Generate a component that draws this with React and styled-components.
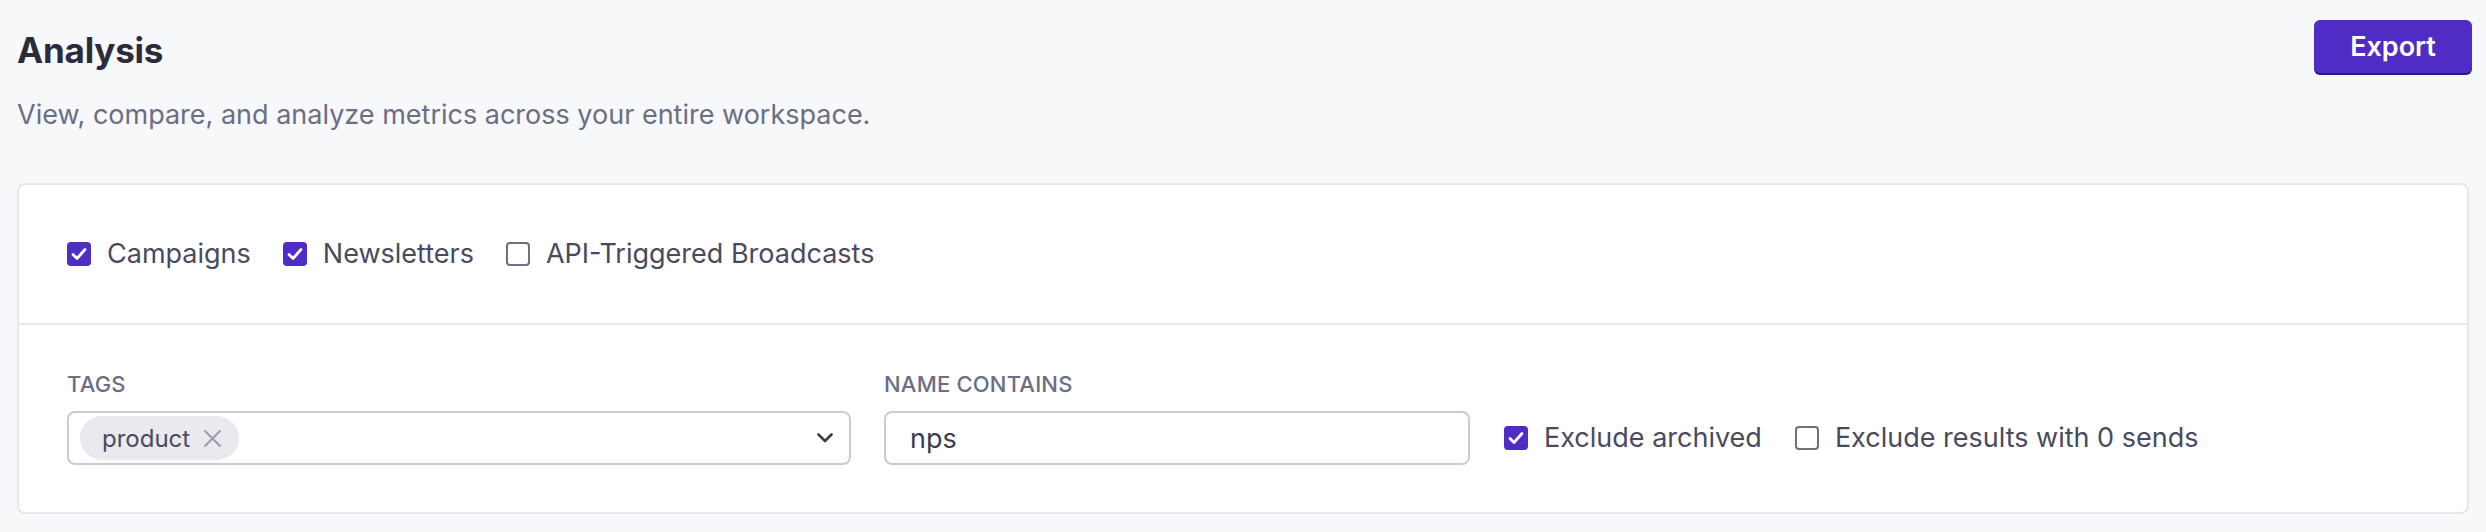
import React from "react";
import styled, { createGlobalStyle } from "styled-components";

const GlobalStyle = createGlobalStyle`
  html, body {
    margin: 0;
    padding: 0;
    background: #f7f8fa;
  }
  body {
    font-family: Inter, "Noto Sans", "Liberation Sans", sans-serif;
    -webkit-font-smoothing: antialiased;
  }
  * { box-sizing: border-box; }
`;

const Page = styled.div`
  padding: 20px 14px 0 17px;
`;

const Header = styled.header`
  display: flex;
  justify-content: space-between;
  align-items: flex-start;
`;

const TitleBlock = styled.div`
  padding-top: 8px;
`;

const Title = styled.h1`
  margin: 0;
  font-size: 35px;
  line-height: 45px;
  font-weight: 700;
  color: #2c2b3c;
  letter-spacing: -0.2px;
`;

const Subtitle = styled.p`
  margin: 22px 0 0;
  font-size: 27px;
  line-height: 40px;
  color: #6b6e85;
`;

const ExportButton = styled.button`
  width: 158px;
  height: 53px;
  border: none;
  border-radius: 6px;
  background: #4f2cc3;
  box-shadow: 0 2px 0 #2c1a78;
  color: #ffffff;
  font-family: inherit;
  font-size: 27px;
  font-weight: 600;
  cursor: pointer;
`;

const Card = styled.section`
  margin-top: 48px;
  margin-right: 3px;
  background: #ffffff;
  border: 2px solid #e6e7ec;
  border-radius: 8px;
`;

const TypeRow = styled.div`
  display: flex;
  align-items: center;
  gap: 32px;
  padding: 51px 48px 51px;
  border-bottom: 2px solid #e6e7ec;
`;

const FilterRow = styled.div`
  display: flex;
  align-items: flex-end;
  padding: 44px 48px 47px;
`;

const Field = styled.div`
  display: flex;
  flex-direction: column;
  width: ${(p) => p.$width}px;
  margin-right: ${(p) => p.$gap || 0}px;
`;

const FieldLabel = styled.label`
  font-size: 22px;
  line-height: 31px;
  font-weight: 500;
  letter-spacing: 0.2px;
  color: #6b6e85;
  text-transform: uppercase;
  margin-bottom: 11px;
`;

const SelectBox = styled.div`
  height: 54px;
  display: flex;
  align-items: center;
  justify-content: space-between;
  padding: 0 16px 0 11px;
  border: 2px solid #cbcad8;
  border-radius: 8px;
  background: #fff;
`;

const Chip = styled.span`
  display: inline-flex;
  align-items: center;
  height: 44px;
  padding: 0 17px 0 22px;
  gap: 13px;
  border-radius: 22px;
  background: #e9e9f0;
  color: #4a4a60;
  font-size: 24px;
`;

const TextInput = styled.input`
  height: 54px;
  padding: 0 24px;
  border: 2px solid #cbcad8;
  border-radius: 8px;
  background: #fff;
  font-family: inherit;
  font-size: 27px;
  color: #3b3b50;
  outline: none;
`;

const CheckGroup = styled.div`
  display: flex;
  align-items: center;
  gap: 33px;
  height: 54px;
`;

const CheckItem = styled.label`
  display: inline-flex;
  align-items: center;
  gap: 16px;
  font-size: 27px;
  line-height: 36px;
  color: #4a4a5e;
  cursor: pointer;
`;

const Box = styled.span`
  width: 24px;
  height: 24px;
  border-radius: 4px;
  display: inline-flex;
  align-items: center;
  justify-content: center;
  flex-shrink: 0;
  background: ${(p) => (p.$checked ? "#4f2cc3" : "#ffffff")};
  border: ${(p) => (p.$checked ? "none" : "2px solid #6e6e85")};
`;

function Checkbox({ checked, children }) {
  return (
    <CheckItem>
      <Box $checked={checked}>
        {checked && (
          <svg width="16" height="14" viewBox="0 0 16 14" fill="none">
            <path
              d="M2 7.5 L6 11.5 L14 2.5"
              stroke="#ffffff"
              strokeWidth="2.8"
              strokeLinecap="round"
              strokeLinejoin="round"
            />
          </svg>
        )}
      </Box>
      {children}
    </CheckItem>
  );
}

const XIcon = () => (
  <svg width="19" height="19" viewBox="0 0 19 19" fill="none">
    <path d="M2 2 L17 17 M17 2 L2 17" stroke="#9c9cab" strokeWidth="2" strokeLinecap="round" />
  </svg>
);

const Chevron = () => (
  <svg width="16" height="10" viewBox="0 0 16 10" fill="none">
    <path d="M1.5 1.5 L8 8 L14.5 1.5" stroke="#3b3b4d" strokeWidth="2.6" strokeLinecap="round" strokeLinejoin="round" />
  </svg>
);

export default function App() {
  return (
    <>
      <GlobalStyle />
      <Page>
        <Header>
          <TitleBlock>
            <Title>Analysis</Title>
            <Subtitle>View, compare, and analyze metrics across your entire workspace.</Subtitle>
          </TitleBlock>
          <ExportButton>Export</ExportButton>
        </Header>
        <Card>
          <TypeRow>
            <Checkbox checked>Campaigns</Checkbox>
            <Checkbox checked>Newsletters</Checkbox>
            <Checkbox>API-Triggered Broadcasts</Checkbox>
          </TypeRow>
          <FilterRow>
            <Field $width={784} $gap={33}>
              <FieldLabel>Tags</FieldLabel>
              <SelectBox>
                <Chip>
                  product
                  <XIcon />
                </Chip>
                <Chevron />
              </SelectBox>
            </Field>
            <Field $width={586} $gap={34}>
              <FieldLabel>Name contains</FieldLabel>
              <TextInput defaultValue="nps" />
            </Field>
            <CheckGroup>
              <Checkbox checked>Exclude archived</Checkbox>
              <Checkbox>Exclude results with 0 sends</Checkbox>
            </CheckGroup>
          </FilterRow>
        </Card>
      </Page>
    </>
  );
}
